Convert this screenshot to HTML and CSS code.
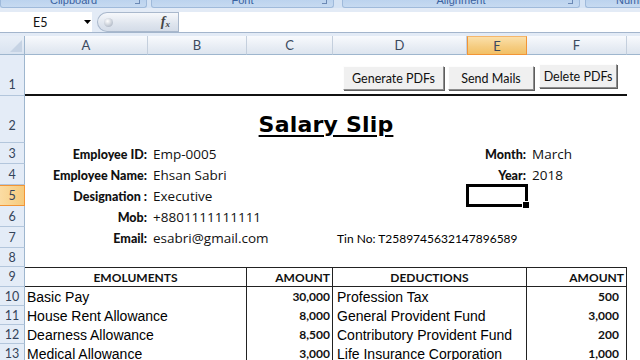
FILE: index.html
```html
<!DOCTYPE html>
<html>
<head>
<meta charset="utf-8">
<link rel="stylesheet" href="styles.css">
</head>
<body>
<div class="top">
  <div class="ribbon">
    <div class="grp g-clip"><span>Clipboard</span><i class="launch"></i></div>
    <div class="grp g-font"><span>Font</span><i class="launch"></i></div>
    <div class="grp g-align"><span>Alignment</span><i class="launch"></i></div>
    <div class="grp g-num"><span>Number</span></div>
  </div>
  <div class="fbar">
    <div class="namebox">E5
      <svg class="dd" width="8" height="5" viewBox="0 0 8 5"><path d="M0 0H7L3.5 4Z" fill="#000"/></svg>
    </div>
    <div class="pill">
      <span class="dot"></span>
      <span class="fx">f<sub>x</sub></span>
    </div>
    <div class="finput"></div>
  </div>
</div>

<div class="sheet">
  <div class="corner"><svg width="12" height="12" viewBox="0 0 12 12"><path d="M12 0V12H0Z" fill="#c6d3e4"/></svg></div>
  <div class="ch">A</div>
  <div class="ch">B</div>
  <div class="ch">C</div>
  <div class="ch">D</div>
  <div class="ch sel">E</div>
  <div class="ch">F</div>
  <div class="ch last"></div>

  <div class="rh r1">1</div>
  <div class="c s3 rule"></div>
  <div class="c s3 rule btns">
    <button class="btn b-gen">Generate PDFs</button>
    <button class="btn b-send">Send Mails</button>
    <button class="btn b-del">Delete PDFs</button>
  </div>
  <div class="c"></div>

  <div class="rh r2">2</div>
  <div class="c s6 title"><span>Salary Slip</span></div>
  <div class="c"></div>

  <div class="rh">3</div>
  <div class="c lbl">Employee ID:</div>
  <div class="c s3 val">Emp-0005</div>
  <div class="c lbl">Month:</div>
  <div class="c val">March</div>
  <div class="c"></div>

  <div class="rh">4</div>
  <div class="c lbl">Employee Name:</div>
  <div class="c s3 val">Ehsan Sabri</div>
  <div class="c lbl">Year:</div>
  <div class="c val">2018</div>
  <div class="c"></div>

  <div class="rh sel">5</div>
  <div class="c lbl">Designation :</div>
  <div class="c s3 val">Executive</div>
  <div class="c active"></div>
  <div class="c"></div>
  <div class="c"></div>

  <div class="rh">6</div>
  <div class="c lbl">Mob:</div>
  <div class="c s3 val">+8801111111111</div>
  <div class="c s3"></div>

  <div class="rh">7</div>
  <div class="c lbl">Email:</div>
  <div class="c s2 val">esabri@gmail.com</div>
  <div class="c s3 tin">Tin No: T2589745632147896589</div>
  <div class="c"></div>

  <div class="rh">8</div>
  <div class="c s7"></div>

  <div class="rh">9</div>
  <div class="c s2 th mid vr">EMOLUMENTS</div>
  <div class="c th amt vr">AMOUNT</div>
  <div class="c s2 th mid vr">DEDUCTIONS</div>
  <div class="c th amt vr">AMOUNT</div>
  <div class="c"></div>

  <div class="rh">10</div>
  <div class="c s2 td vr">Basic Pay</div>
  <div class="c num vr">30,000</div>
  <div class="c s2 td ded vr">Profession Tax</div>
  <div class="c num numf vr">500</div>
  <div class="c"></div>

  <div class="rh">11</div>
  <div class="c s2 td vr">House Rent Allowance</div>
  <div class="c num vr">8,000</div>
  <div class="c s2 td ded vr">General Provident Fund</div>
  <div class="c num numf vr">3,000</div>
  <div class="c"></div>

  <div class="rh">12</div>
  <div class="c s2 td vr">Dearness Allowance</div>
  <div class="c num vr">8,500</div>
  <div class="c s2 td ded vr">Contributory Provident Fund</div>
  <div class="c num numf vr">200</div>
  <div class="c"></div>

  <div class="rh">13</div>
  <div class="c s2 td vr">Medical Allowance</div>
  <div class="c num vr">3,000</div>
  <div class="c s2 td ded vr">Life Insurance Corporation</div>
  <div class="c num numf vr">1,000</div>
  <div class="c"></div>
</div>
</body>
</html>
```

FILE: styles.css
```css
* { box-sizing: border-box; margin: 0; padding: 0; }

body {
  margin: 0;
  width: 640px;
  height: 360px;
  overflow: hidden;
  background: #fff;
  font-family: Lato, "Liberation Sans", sans-serif;
}

/* ---------- top: ribbon + formula bar ---------- */
.top {
  height: 36px;
  background: #e3ebf6;
}

.ribbon {
  height: 8px;
  display: flex;
  background: #d5e3f4;
  overflow: hidden;
}

.grp {
  position: relative;
  height: 8px;
  background: linear-gradient(#bcd3ee, #c6daf1);
  border: 1px solid #9fbadb;
  border-top: 0;
  border-radius: 0 0 3px 3px;
  overflow: hidden;
  text-align: center;
  font-family: "Liberation Sans", sans-serif;
  font-size: 11px;
  color: #3a62a0;
}

.grp span {
  display: block;
  line-height: 12px;
  margin-top: -6px;
}

.launch {
  position: absolute;
  right: 6px;
  top: 0;
  width: 5px;
  height: 4px;
  border-right: 1px solid #6b89b5;
  border-bottom: 1px solid #6b89b5;
}

.g-clip { width: 147px; }
.g-font { width: 183px; margin-left: 4px; }
.g-align { width: 238px; margin-left: 8px; }
.g-num { flex: 1; margin-left: 5px; text-align: left; padding-left: 30px; border-right: 0; border-radius: 0 0 0 3px; }

.fbar {
  height: 21px;
  margin-top: 4px;
  display: flex;
  border-bottom: 1px solid #a3b5cc;
}

.namebox {
  position: relative;
  width: 92px;
  background: #fff;
  display: flex;
  align-items: center;
  padding-left: 33px;
  font-family: Lato, sans-serif;
  font-size: 12.5px;
  color: #111;
}

.namebox .dd {
  position: absolute;
  left: 84px;
  top: 8px;
}

.pill {
  position: relative;
  margin-left: 5px;
  width: 81px;
  background: linear-gradient(#f6f8fb, #dfe5ee 60%, #d4dce8);
  border: 1px solid #a9b8cc;
  border-right: 0;
  border-radius: 10px 0 0 10px;
}

.dot {
  position: absolute;
  left: 6px;
  top: 5px;
  width: 9px;
  height: 9px;
  border-radius: 50%;
  background: radial-gradient(circle at 40% 35%, #ffffff, #b8c0cc 70%);
}

.fx {
  position: absolute;
  right: 8px;
  top: 1px;
  font-family: "Liberation Serif", serif;
  font-style: italic;
  font-weight: bold;
  font-size: 14px;
  color: #444;
}

.fx sub {
  font-size: 9px;
  vertical-align: -1px;
}

.finput {
  flex: 1;
  background: #fff;
  border-left: 1px solid #a9b8cc;
}

/* ---------- sheet grid ---------- */
.sheet {
  display: grid;
  grid-template-columns: 25px 123px 99px 86px 134px 60px 100px 13px;
  grid-template-rows: 19px 41px 47px repeat(5, 21px) 19px 20px repeat(4, 19px);
}

.corner {
  background: linear-gradient(#e9eff7, #d9e3f0);
  border-right: 1px solid #9eb6ce;
  border-bottom: 1px solid #9eb6ce;
  display: flex;
  align-items: flex-end;
  justify-content: flex-end;
  padding: 0 2px 2px 0;
}

.ch {
  background: linear-gradient(#f8fafd, #e9eef5 55%, #dde5ef);
  border-right: 1px solid #c4cfdd;
  border-bottom: 1px solid #9eb6ce;
  display: flex;
  align-items: center;
  justify-content: center;
  font-family: Lato, sans-serif;
  font-size: 13px;
  color: #3c4a5e;
}

.ch.sel {
  background: linear-gradient(#fbe0ab, #f5cd82 55%, #f2c066);
  border: 1px solid #f29536;
  border-top-color: #f5b66a;
}

.ch.last { border-right: 0; }

.rh {
  background: #e4ecf7;
  border-right: 1px solid #9eb6ce;
  border-bottom: 1px solid #b3c6dc;
  display: flex;
  align-items: center;
  justify-content: center;
  font-family: Lato, sans-serif;
  font-size: 12.5px;
  color: #34445a;
}

.rh.r1 { align-items: flex-end; padding-bottom: 3px; }
.rh.r2 { align-items: flex-end; padding-bottom: 9px; }

.rh.sel {
  background: linear-gradient(90deg, #fbdca3, #f6cb7d);
  border: 1px solid #f29536;
  border-left: 0;
}

.c {
  display: flex;
  align-items: center;
  min-width: 0;
  white-space: nowrap;
  color: #000;
}

.s2 { grid-column: span 2; }
.s3 { grid-column: span 3; }
.s6 { grid-column: span 6; }
.s7 { grid-column: span 7; }

.rule { border-bottom: 2px solid #111; }

/* buttons */
.btns {
  align-items: flex-start;
  padding: 11px 0 0 10px;
  gap: 4px;
}

.btn {
  height: 24px;
  background: #f0f0f0;
  border: 1px solid;
  border-color: #fdfdfd #8c8c8c #8c8c8c #fdfdfd;
  box-shadow: 1px 1px 0 #5e5e5e;
  font-family: Lato, sans-serif;
  font-size: 12.5px;
  color: #111;
  padding: 0;
}

.b-gen { width: 101px; }
.b-send { width: 86px; }
.b-del { width: 78px; margin-top: -2px; margin-left: 1px; }

/* title */
.title {
  justify-content: center;
  align-items: flex-end;
  padding-bottom: 5px;
}

.title span {
  font-family: "DejaVu Sans", sans-serif;
  font-weight: bold;
  font-size: 22px;
  line-height: 26px;
  text-decoration: underline;
  text-decoration-thickness: 2px;
  text-underline-offset: 3px;
  letter-spacing: 0.2px;
}

/* details */
.lbl {
  justify-content: flex-end;
  padding-right: 1px;
  font-family: Lato, sans-serif;
  font-weight: 900;
  font-size: 12.5px;
  color: #111;
  padding-top: 2px;
}

.val {
  padding-left: 5px;
  font-family: "Open Sans", sans-serif;
  font-size: 13.5px;
  color: #111;
}

.tin {
  padding-left: 4px;
  font-family: Lato, sans-serif;
  font-size: 12px;
  padding-top: 1px;
}

.active { position: relative; }

.active::after {
  content: "";
  position: absolute;
  left: -1px;
  right: -1px;
  top: -1px;
  bottom: -1px;
  border: 3px solid #000;
}

.active::before {
  content: "";
  position: absolute;
  right: -3px;
  bottom: -3px;
  width: 6px;
  height: 6px;
  background: #000;
  border: 1px solid #fff;
  z-index: 1;
}

/* table */
.th {
  border-top: 1px solid #222;
  border-bottom: 1px solid #222;
  font-family: Lato, sans-serif;
  font-weight: bold;
  font-size: 12px;
  color: #111;
}

.mid { justify-content: center; }

.amt {
  justify-content: flex-end;
  padding-right: 2px;
}

.vr { border-right: 1px solid #222; }

.td {
  padding-left: 2px;
  font-family: "Liberation Sans", sans-serif;
  font-size: 14px;
}

.td.ded { padding-left: 4px; }

.num {
  justify-content: flex-end;
  padding-right: 2px;
  font-family: Lato, sans-serif;
  font-weight: bold;
  font-size: 12px;
  color: #111;
}

.num.numf { padding-right: 7px; }
```
